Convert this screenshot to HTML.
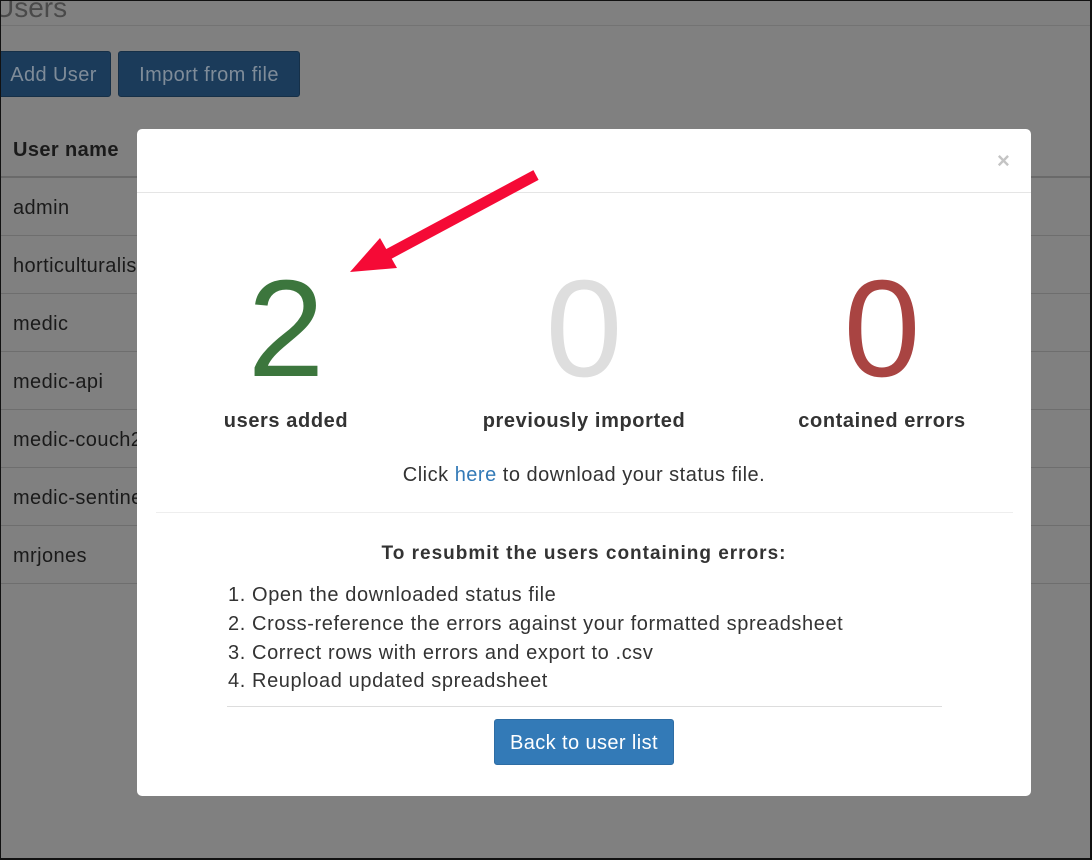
<!DOCTYPE html>
<html><head><meta charset="utf-8"><style>
*{margin:0;padding:0;box-sizing:border-box}
body{width:1092px;height:860px;overflow:hidden;background:#808080;font-family:"Liberation Sans",sans-serif;position:relative;color:#1a1a1a}
.a{position:absolute;white-space:nowrap}
.frame{position:absolute;left:0;top:0;width:1092px;height:860px;border:1px solid #111;border-right:2px solid #111;border-bottom:2px solid #111;pointer-events:none}
.row{position:absolute;left:0;width:1092px;border-top:1px solid #6e6e6e}
.btn{position:absolute;background:#1b3b5a;border:1px solid #163048;border-radius:3px;color:#7f8c99;font-size:20px;text-align:center;line-height:46px;letter-spacing:0.4px}
.bg{font-size:20px;letter-spacing:0.4px}
.modal{position:absolute;left:137px;top:129px;width:894px;height:667px;background:#fff;border-radius:5px}
.big{position:absolute;top:260px;font-size:138px;line-height:138px;text-align:center;width:200px}
.lbl{position:absolute;top:410px;font-size:20px;font-weight:bold;color:#333;text-align:center;width:300px;letter-spacing:0.6px}
.li{font-size:20px;color:#333;letter-spacing:0.6px}
</style></head><body>
<div class="a" style="left:-6px;top:-8px;font-size:28px;color:#4a4a4a">Users</div>
<div class="row" style="top:25px;border-color:#737373"></div>
<div class="btn" style="left:-4px;top:51px;width:115px;height:46px">Add User</div>
<div class="btn" style="left:118px;top:51px;width:182px;height:46px">Import from file</div>
<div class="a bg" style="left:13px;top:139px;font-weight:bold">User name</div>
<div class="row" style="top:176px;border-top:2px solid #6a6a6a"></div>
<div class="a bg" style="left:13px;top:197px">admin</div>
<div class="row" style="top:235px"></div>
<div class="a bg" style="left:13px;top:255px">horticulturalist</div>
<div class="row" style="top:293px"></div>
<div class="a bg" style="left:13px;top:313px">medic</div>
<div class="row" style="top:351px"></div>
<div class="a bg" style="left:13px;top:371px">medic-api</div>
<div class="row" style="top:409px"></div>
<div class="a bg" style="left:13px;top:429px">medic-couch2pg</div>
<div class="row" style="top:467px"></div>
<div class="a bg" style="left:13px;top:487px">medic-sentinel</div>
<div class="row" style="top:525px"></div>
<div class="a bg" style="left:13px;top:545px">mrjones</div>
<div class="row" style="top:583px"></div>

<div class="modal"></div>
<div class="a" style="left:997px;top:148px;font-size:22px;color:#c4c4c4;font-weight:bold">×</div>
<div class="row" style="top:192px;left:137px;width:894px;border-color:#e5e5e5"></div>
<div class="big" style="left:186px;color:#3c763d">2</div>
<div class="big" style="left:484px;color:#dedede">0</div>
<div class="big" style="left:782px;color:#a94442">0</div>
<div class="lbl" style="left:136px">users added</div>
<div class="lbl" style="left:434px">previously imported</div>
<div class="lbl" style="left:732px">contained errors</div>
<div class="a" style="left:0;width:1168px;text-align:center;top:464px;font-size:20px;color:#333;letter-spacing:0.5px">Click <span style="color:#337ab7">here</span> to download your status file.</div>
<div class="row" style="top:512px;left:156px;width:857px;border-color:#eee"></div>
<div class="a" style="left:0;width:1168px;text-align:center;top:543px;font-size:19px;font-weight:bold;color:#333;letter-spacing:1px">To resubmit the users containing errors:</div>
<div class="a li" style="left:228px;top:584px">1. Open the downloaded status file</div>
<div class="a li" style="left:228px;top:613px">2. Cross-reference the errors against your formatted spreadsheet</div>
<div class="a li" style="left:228px;top:642px">3. Correct rows with errors and export to .csv</div>
<div class="a li" style="left:228px;top:670px">4. Reupload updated spreadsheet</div>
<div class="row" style="top:706px;left:227px;width:715px;border-color:#ddd"></div>
<div class="a" style="left:494px;top:719px;width:180px;height:46px;background:#337ab7;border:1px solid #2e6da4;border-radius:3px;color:#fff;font-size:20px;text-align:center;line-height:46px;letter-spacing:0.4px">Back to user list</div>

<svg class="a" style="left:0;top:0" width="1092" height="860">
<line x1="536" y1="175" x2="385" y2="256" stroke="#f50a36" stroke-width="11"/>
<polygon points="350,272 380,238 397,268" fill="#f50a36"/>
</svg>
<div class="frame"></div>
</body></html>
